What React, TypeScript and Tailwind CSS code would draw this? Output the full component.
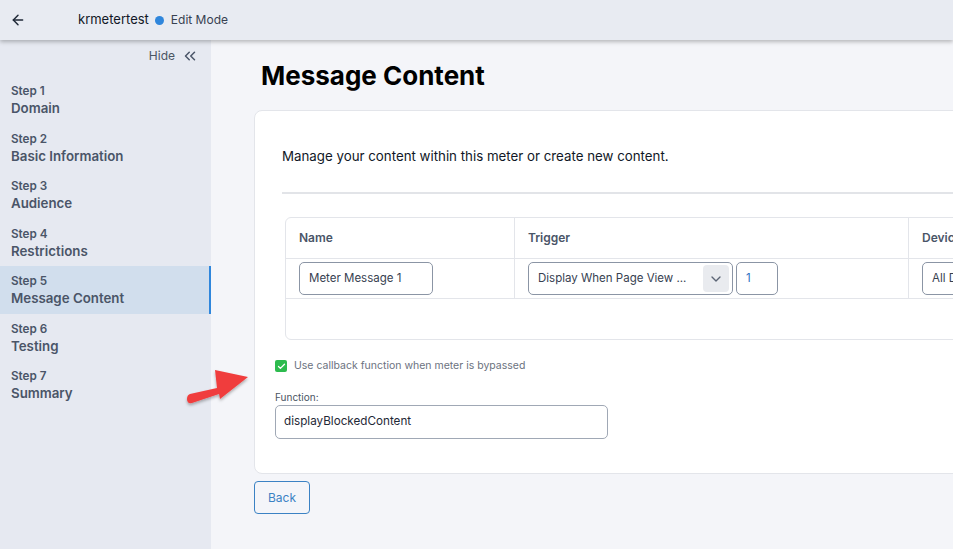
import { ArrowLeft, ChevronsLeft, ChevronDown, Check } from 'lucide-react';

const steps = [
  { n: 1, name: 'Domain' },
  { n: 2, name: 'Basic Information' },
  { n: 3, name: 'Audience' },
  { n: 4, name: 'Restrictions' },
  { n: 5, name: 'Message Content', active: true },
  { n: 6, name: 'Testing' },
  { n: 7, name: 'Summary' },
];

function Sidebar() {
  return (
    <aside className="w-[211px] shrink-0 bg-[#e6e9f1] pt-[6px]">
      <div className="flex items-center justify-end gap-[6px] pr-[12px] h-[20px] text-[12px] text-[#4b5563]">
        <span>Hide</span>
        <ChevronsLeft className="w-[18px] h-[18px] text-[#4a5568]" strokeWidth={2} />
      </div>
      <div className="mt-[10px]">
        {steps.map((s) => (
          <div
            key={s.n}
            className={`h-[47.5px] px-[11px] pt-[7px] ${s.active ? 'bg-[#d1deed] border-r-2 border-[#2f86dc]' : ''}`}
          >
            <div className="text-[11.7px] leading-[16px] font-semibold text-[#4a5568]">Step {s.n}</div>
            <div className="text-[13.3px] leading-[19px] font-semibold text-[#4a5568]">{s.name}</div>
          </div>
        ))}
      </div>
    </aside>
  );
}

function Card() {
  return (
    <div className="w-[760px] bg-white border border-[#e3e5ea] rounded-[8px]">
      <div className="px-[27px] pt-[35px]">
        <p className="text-[13.3px] leading-[20px] text-[#111827]">Manage your content within this meter or create new content.</p>
        <div className="mt-[26px] h-[2px] bg-[#e2e4e8]" />
        <div className="mt-[23px] ml-[3px] border border-[#e3e5ea] rounded-[6px] h-[123px]">
          <div className="grid grid-cols-[229px_394px_1fr] h-[41px] border-b border-[#e3e5ea] text-[12px] font-semibold text-[#4a5568]">
            <div className="flex items-center pl-[13px] border-r border-[#e3e5ea]">Name</div>
            <div className="flex items-center pl-[13px] border-r border-[#e3e5ea]">Trigger</div>
            <div className="flex items-center pl-[13px]">Device</div>
          </div>
          <div className="grid grid-cols-[229px_394px_1fr] h-[40px] border-b border-[#e3e5ea] text-[11.5px] text-[#374151]">
            <div className="flex items-center pl-[13px] border-r border-[#e3e5ea]">
              <div className="w-[134px] h-[33px] border border-[#8b95a5] rounded-[5px] flex items-center pl-[9px]">Meter Message 1</div>
            </div>
            <div className="flex items-center pl-[13px] gap-[3px] border-r border-[#e3e5ea]">
              <div className="w-[205px] h-[33px] border border-[#8b95a5] rounded-[5px] flex items-center pl-[9px] pr-[3px]">
                <span className="flex-1">Display When Page View ...</span>
                <span className="w-[26px] h-[27px] rounded-[4px] bg-[#e9ebef] flex items-center justify-center">
                  <ChevronDown className="w-[16px] h-[16px] text-[#5b6575]" strokeWidth={2} />
                </span>
              </div>
              <div className="w-[42px] h-[33px] border border-[#8b95a5] rounded-[5px] flex items-center pl-[9px]">
                <span className="text-[#2f6fbf]">1</span>
              </div>
            </div>
            <div className="flex items-center pl-[13px]">
              <div className="w-[120px] h-[33px] border border-[#8b95a5] rounded-[5px] flex items-center pl-[9px] whitespace-nowrap">All Devices</div>
            </div>
          </div>
        </div>
      </div>
      <div className="px-[20px] pt-[19px] pb-[34px]">
        <div className="flex items-center gap-[7px] h-[14px]">
          <span className="w-[12px] h-[12px] rounded-[2px] bg-[#2dbb4e] flex items-center justify-center">
            <Check className="w-[9px] h-[9px] text-white" strokeWidth={3.5} />
          </span>
          <span className="text-[10.5px] text-[#6b7280]">Use callback function when meter is bypassed</span>
        </div>
        <div className="mt-[18px] text-[10px] leading-[12px] text-[#4b5563]">Function:</div>
        <div className="mt-[2px] w-[333px] h-[34px] border border-[#a0a8b5] rounded-[5px] flex items-center pl-[8px] text-[11.7px] text-[#1f2937]">
          displayBlockedContent
        </div>
      </div>
    </div>
  );
}

export default function App() {
  return (
    <div className="relative w-[953px] h-[549px] overflow-hidden flex flex-col bg-[#f4f5f9] font-['Inter',sans-serif]">
      <header className="relative z-10 h-[40px] shrink-0 bg-[#e8ebf2] flex items-center shadow-[0_2px_4px_rgba(0,0,0,0.25)]">
        <ArrowLeft className="ml-[10px] w-[16px] h-[16px] text-[#1f2937]" strokeWidth={2.2} />
        <span className="ml-[52px] text-[13px] text-[#111827]">krmetertest</span>
        <span className="ml-[6px] w-[9px] h-[9px] rounded-full bg-[#2f86dc]" />
        <span className="ml-[7px] text-[12px] text-[#374151]">Edit Mode</span>
      </header>
      <div className="flex flex-1 min-h-0">
        <Sidebar />
        <main className="flex-1 pl-[43px] pt-[18px] overflow-hidden">
          <h1 className="ml-[7px] text-[26px] leading-[36px] font-bold text-black">Message Content</h1>
          <div className="mt-[16px]">
            <Card />
          </div>
          <button className="mt-[7px] w-[56px] h-[33px] border border-[#3b82c4] rounded-[4px] text-[12px] text-[#3b82c4] bg-transparent">
            Back
          </button>
        </main>
      </div>
      <svg className="absolute left-[184px] top-[364px]" width="70" height="44" viewBox="0 0 70 44">
        <defs>
          <filter id="sh" x="-20%" y="-20%" width="140%" height="160%">
            <feDropShadow dx="0" dy="2" stdDeviation="1.5" floodColor="#000" floodOpacity="0.3" />
          </filter>
        </defs>
        <path
          d="M6 30 L33 24 L31 6 L64 13 L36 35 L35 30 L8 39 Q3 40 3 35 Q3 31 6 30 Z"
          fill="#f03e3e"
          filter="url(#sh)"
        />
      </svg>
    </div>
  );
}
